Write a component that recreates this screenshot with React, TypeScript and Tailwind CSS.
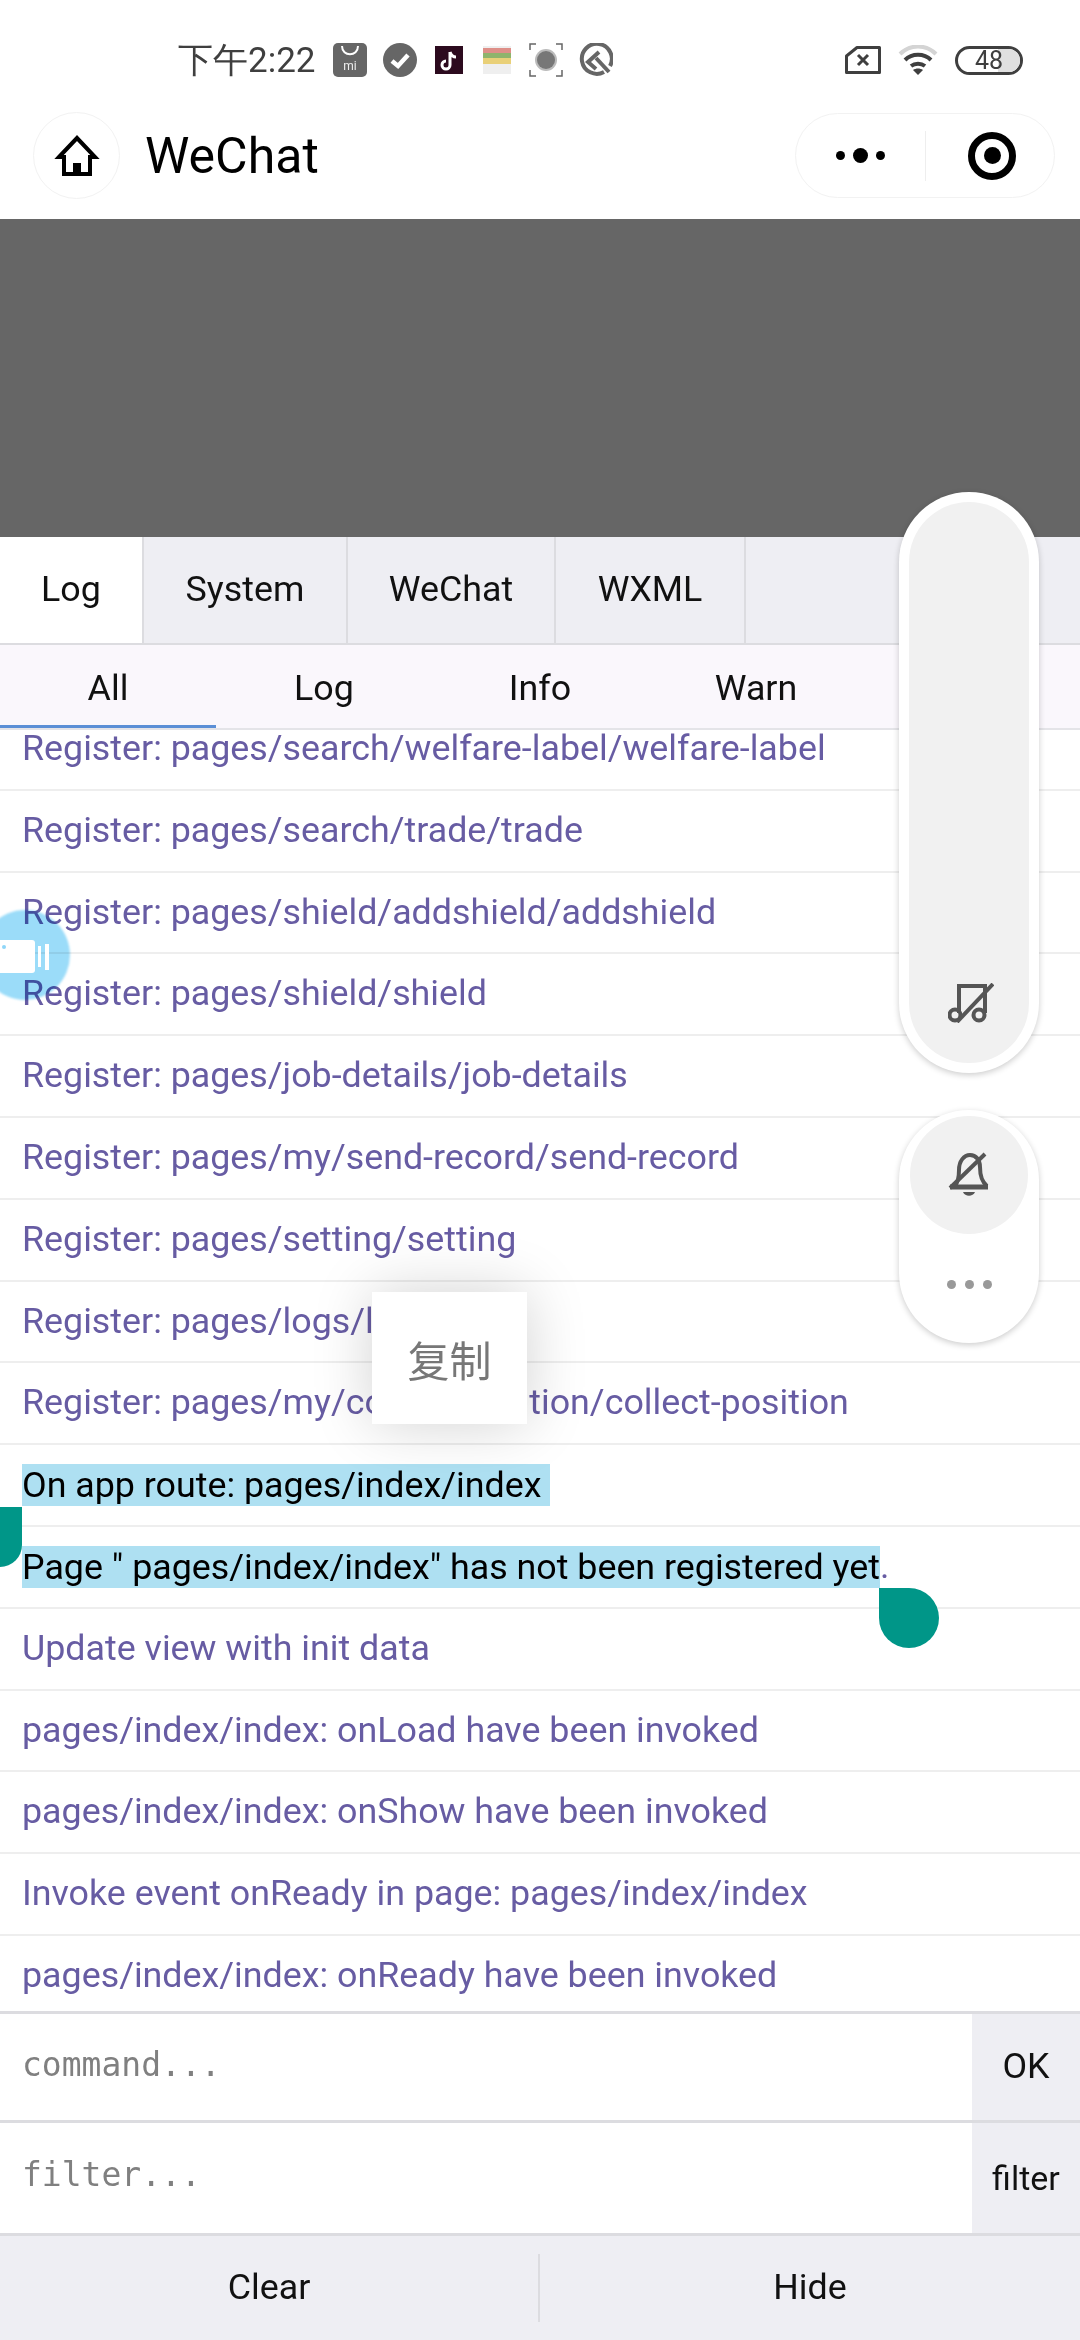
import { Fragment } from 'react'

const rows = [
  'Register: pages/search/welfare-label/welfare-label',
  'Register: pages/search/trade/trade',
  'Register: pages/shield/addshield/addshield',
  'Register: pages/shield/shield',
  'Register: pages/job-details/job-details',
  'Register: pages/my/send-record/send-record',
  'Register: pages/setting/setting',
  'Register: pages/logs/logs',
  'Register: pages/my/collect-position/collect-position',
]

const rowsAfter = [
  'Update view with init data',
  'pages/index/index: onLoad have been invoked',
  'pages/index/index: onShow have been invoked',
  'Invoke event onReady in page: pages/index/index',
  'pages/index/index: onReady have been invoked',
]

const mainTabs = [
  { label: 'Log', width: 'w-[144px]', active: true },
  { label: 'System', width: 'w-[204px]', active: false },
  { label: 'WeChat', width: 'w-[208px]', active: false },
  { label: 'WXML', width: 'w-[190px]', active: false },
]

const subTabs = ['All', 'Log', 'Info', 'Warn', 'Error']

function LogRow({ children }: { children: React.ReactNode }) {
  return (
    <div className="h-[81.8px] shrink-0 flex items-center pl-[22px] border-b-2 border-[#eeeeee] text-[35.8px] text-[#675ca3] whitespace-nowrap">
      {children}
    </div>
  )
}

function StatusBar() {
  return (
    <div className="h-[100px] shrink-0 bg-white flex items-center pt-[20px] pl-[178px] pr-[57px]">
      <span className="text-[35px] text-[#3f3f3f] mr-[17px] leading-none">下午2:22</span>
      <div className="flex items-center gap-[16px]">
        <svg width="34" height="34" viewBox="0 0 34 34">
          <rect width="34" height="34" rx="5" fill="#666" />
          <path d="M9 3c0 11 16 11 16 0" fill="none" stroke="#fff" strokeWidth="2" />
          <text x="17" y="27" textAnchor="middle" fontSize="12" fill="#eee" fontFamily="Roboto, sans-serif">mi</text>
        </svg>
        <svg width="34" height="34" viewBox="0 0 34 34">
          <circle cx="17" cy="17" r="17" fill="#666" />
          <path d="M9 18l6 5 10-11" fill="none" stroke="#fff" strokeWidth="4.500" />
        </svg>
        <svg width="28" height="28" viewBox="0 0 28 28" className="mx-[2px]">
          <rect width="28" height="28" fill="#2c0a1e" />
          <path d="M15 6v13a4 4 0 1 1-4-4M15 6c1 3 3 5 6 5" fill="none" stroke="#fff" strokeWidth="3" />
        </svg>
        <svg width="28" height="28" viewBox="0 0 28 28" className="mx-[2px]">
          <rect width="28" height="28" fill="#efefef" />
          <rect y="2" width="28" height="5" fill="#de8f88" />
          <rect y="7" width="28" height="5" fill="#8fb46c" />
          <rect y="12" width="28" height="6" fill="#e9d078" />
        </svg>
        <svg width="34" height="34" viewBox="0 0 34 34">
          <path d="M1 7V1h6M27 1h6v6M33 27v6h-6M7 33H1v-6" fill="none" stroke="#666" strokeWidth="1.500" />
          <circle cx="17" cy="17" r="11" fill="#bbb" />
          <circle cx="17" cy="17" r="9" fill="#777" />
        </svg>
        <svg width="34" height="34" viewBox="0 0 34 34" fill="none" stroke="#666" strokeWidth="4">
          <path d="M25 29A15 15 0 1 1 31 23" />
          <path d="M20 9L9 19l8 7" />
          <path d="M17 15l13 14" />
        </svg>
      </div>
      <div className="ml-auto flex items-center">
        <svg width="36" height="28" viewBox="0 0 36 28">
          <path d="M12 1.500h22.500v25H1.500V10z" fill="none" stroke="#3f3f3f" strokeWidth="3" strokeLinejoin="round" />
          <path d="M13 9l10 10M23 9L13 19" stroke="#3f3f3f" strokeWidth="3" />
        </svg>
        <svg width="40" height="30" viewBox="0 0 40 30" className="ml-[17px]">
          <path d="M2 9c10-10 26-10 36 0" fill="none" stroke="#d4d4d4" strokeWidth="4" />
          <path d="M7 15c7-7 19-7 26 0M13 21c4-3 10-3 14 0" fill="none" stroke="#3f3f3f" strokeWidth="4" />
          <path d="M20 30l-5-5c3-2 7-2 10 0z" fill="#3f3f3f" />
        </svg>
        <div className="relative ml-[17px] w-[68px] h-[29px] rounded-[15px] border-[3px] border-[#3f3f3f] overflow-hidden flex items-center justify-center">
          <div className="absolute right-0 inset-y-0 w-[22px] bg-[#e0e0e0]" />
          <span className="relative text-[25px] leading-none text-[#3f3f3f] font-['Roboto',sans-serif]">48</span>
        </div>
      </div>
    </div>
  )
}

function NavBar() {
  return (
    <div className="h-[119px] shrink-0 bg-white flex items-center pb-[8px] pl-[33px] pr-[25px]">
      <div className="w-[87px] h-[87px] rounded-full border border-[#f2f2f2] flex items-center justify-center">
        <svg width="46" height="41" viewBox="0 0 46 41" fill="none" stroke="#000" strokeWidth="4">
          <path d="M5 22L23 3l18 19h-5v17H10V22z" />
          <rect x="19" y="28" width="8" height="11" fill="#000" stroke="none" />
        </svg>
      </div>
      <span className="ml-[25px] text-[50px] text-black leading-none">WeChat</span>
      <div className="ml-auto w-[260px] h-[85px] rounded-[43px] border border-[#f2f2f2] flex items-center">
        <div className="w-[130px] flex items-center justify-center gap-[8px] border-r border-[#eeeeee] h-[50px]">
          <span className="w-[9px] h-[9px] rounded-full bg-black" />
          <span className="w-[15px] h-[15px] rounded-full bg-black" />
          <span className="w-[9px] h-[9px] rounded-full bg-black" />
        </div>
        <div className="flex-1 flex items-center justify-center pl-[4px]">
          <div className="w-[48px] h-[48px] rounded-full border-[7px] border-black flex items-center justify-center">
            <div className="w-[17px] h-[17px] rounded-full bg-black" />
          </div>
        </div>
      </div>
    </div>
  )
}

export default function App() {
  return (
    <div className="relative w-[1080px] h-[2340px] overflow-hidden bg-white flex flex-col font-['Roboto',sans-serif]">
      <StatusBar />
      <NavBar />
      <div className="h-[318px] shrink-0 bg-[#666666]" />

      <div className="h-[108px] shrink-0 flex bg-[#eeeef3] border-b-2 border-[#dcdce0] text-[35.8px] text-[#111]">
        {mainTabs.map((tab) => (
          <div
            key={tab.label}
            className={`${tab.width} flex items-center justify-center border-r-2 border-[#dcdce0] ${tab.active ? 'bg-white' : ''}`}
          >
            {tab.label}
          </div>
        ))}
      </div>

      <div className="h-[85px] shrink-0 flex bg-[#faf7fc] border-b-2 border-[#e4e4e8] text-[35.8px] text-[#111]">
        {subTabs.map((tab, i) => (
          <div
            key={tab}
            className={`w-[216px] flex items-center justify-center pt-[7px] border-b-[3px] ${i === 0 ? 'border-[#5b8fd6]' : 'border-transparent'}`}
          >
            {tab}
          </div>
        ))}
      </div>

      <div className="flex-1 min-h-0 overflow-hidden">
        <div className="-mt-[21px] flex flex-col">
          {rows.map((row) => (
            <LogRow key={row}>{row}</LogRow>
          ))}
          <LogRow>
            <span className="bg-[#aee0f2] text-black leading-[42px] pr-[9px]">On app route: pages/index/index</span>
          </LogRow>
          <LogRow>
            <Fragment>
              <span className="bg-[#aee0f2] text-black leading-[42px]">Page " pages/index/index" has not been registered yet</span>
              <span>.</span>
            </Fragment>
          </LogRow>
          {rowsAfter.map((row) => (
            <LogRow key={row}>{row}</LogRow>
          ))}
        </div>
      </div>

      <div className="h-[109px] shrink-0 flex border-t-[3px] border-[#dcdce0] bg-white">
        <input
          placeholder="command..."
          className="flex-1 min-w-0 pl-[22px] pb-[5px] outline-none text-[33px] font-['DejaVu_Sans_Mono',monospace] placeholder:text-[#808080]"
        />
        <div className="w-[108px] flex items-center justify-center bg-[#eeeef3] text-[35.8px] text-[#111]">OK</div>
      </div>
      <div className="h-[113px] shrink-0 flex border-t-[3px] border-[#dcdce0] bg-white">
        <input
          placeholder="filter..."
          className="flex-1 min-w-0 pl-[22px] pb-[7px] outline-none text-[33px] font-['DejaVu_Sans_Mono',monospace] placeholder:text-[#808080]"
        />
        <div className="w-[108px] flex items-center justify-center bg-[#eeeef3] text-[34px] text-[#111]">filter</div>
      </div>
      <div className="h-[107px] shrink-0 flex items-center bg-[#eeeef3] border-t-[3px] border-[#dcdce0] text-[35.8px] text-[#111]">
        <div className="w-[540px] h-[68px] flex items-center justify-center border-r-2 border-[#dcdce0]">Clear</div>
        <div className="flex-1 flex items-center justify-center">Hide</div>
      </div>

      {/* floating camera */}
      <div className="absolute left-[-20px] top-[910px] w-[90px] h-[90px] rounded-full bg-[#9bdcf9] blur-[1px] mix-blend-multiply" />
      <svg width="52" height="40" viewBox="0 0 52 40" className="absolute left-0 top-[938px]">
        <path d="M0 2h32q3 0 3 3v27q0 3-3 3H0z" fill="#fff" />
        <circle cx="4" cy="9" r="2" fill="#8fd6f8" />
        <path d="M38 8h3v21h-3zM45 6h4v26h-4z" fill="#fff" />
      </svg>

      {/* selection handles */}
      <div className="absolute left-0 top-[1507px] w-[22px] h-[60px] bg-[#009688] rounded-br-[22px]" />
      <div className="absolute left-[879px] top-[1588px] w-[60px] h-[60px] bg-[#009688] rounded-full rounded-tl-none" />

      {/* copy popup */}
      <div className="absolute left-[372px] top-[1292px] w-[155px] h-[132px] bg-white shadow-[0_0_60px_rgba(0,0,0,0.18)] flex items-center justify-center text-[42px] text-[#777] font-['Noto_Sans_CJK_SC',sans-serif]">
        复制
      </div>

      {/* floating pills */}
      <div className="absolute left-[899px] top-[492px] w-[140px] h-[581px] rounded-[70px] bg-white shadow-[0_2px_6px_rgba(0,0,0,0.2)] p-[10px]">
        <div className="w-full h-full rounded-[60px] bg-[#f1f1f1] flex items-end justify-center pb-[40px] pl-[3px]">
          <svg width="46" height="40" viewBox="0 0 46 40" fill="none" stroke="#555" strokeWidth="4">
            <path d="M11 30V3h26v27" />
            <circle cx="7" cy="32" r="5.500" />
            <circle cx="31" cy="32" r="5.500" />
            <path d="M45 1L9 39" />
          </svg>
        </div>
      </div>
      <div className="absolute left-[899px] top-[1110px] w-[140px] h-[233px] rounded-[70px] bg-white shadow-[0_2px_6px_rgba(0,0,0,0.2)] flex flex-col items-center pt-[6px]">
        <div className="w-[118px] h-[118px] rounded-full bg-[#f1f1f1] flex items-center justify-center">
          <svg width="42" height="46" viewBox="0 0 42 46" fill="none" stroke="#555" strokeWidth="4">
            <path d="M7 34c3-4 4-8 4-16 0-9 5-15 11-15s10 5 10 12c0 10 2 15 7 19" />
            <path d="M2 35h38" strokeWidth="5" />
            <path d="M15 40c2 5 10 5 12 0z" fill="#555" stroke="none" />
            <path d="M37 2L2 36" />
          </svg>
        </div>
        <div className="mt-[46px] flex gap-[9px]">
          <span className="w-[9px] h-[9px] rounded-full bg-[#999]" />
          <span className="w-[9px] h-[9px] rounded-full bg-[#999]" />
          <span className="w-[9px] h-[9px] rounded-full bg-[#999]" />
        </div>
      </div>
    </div>
  )
}
